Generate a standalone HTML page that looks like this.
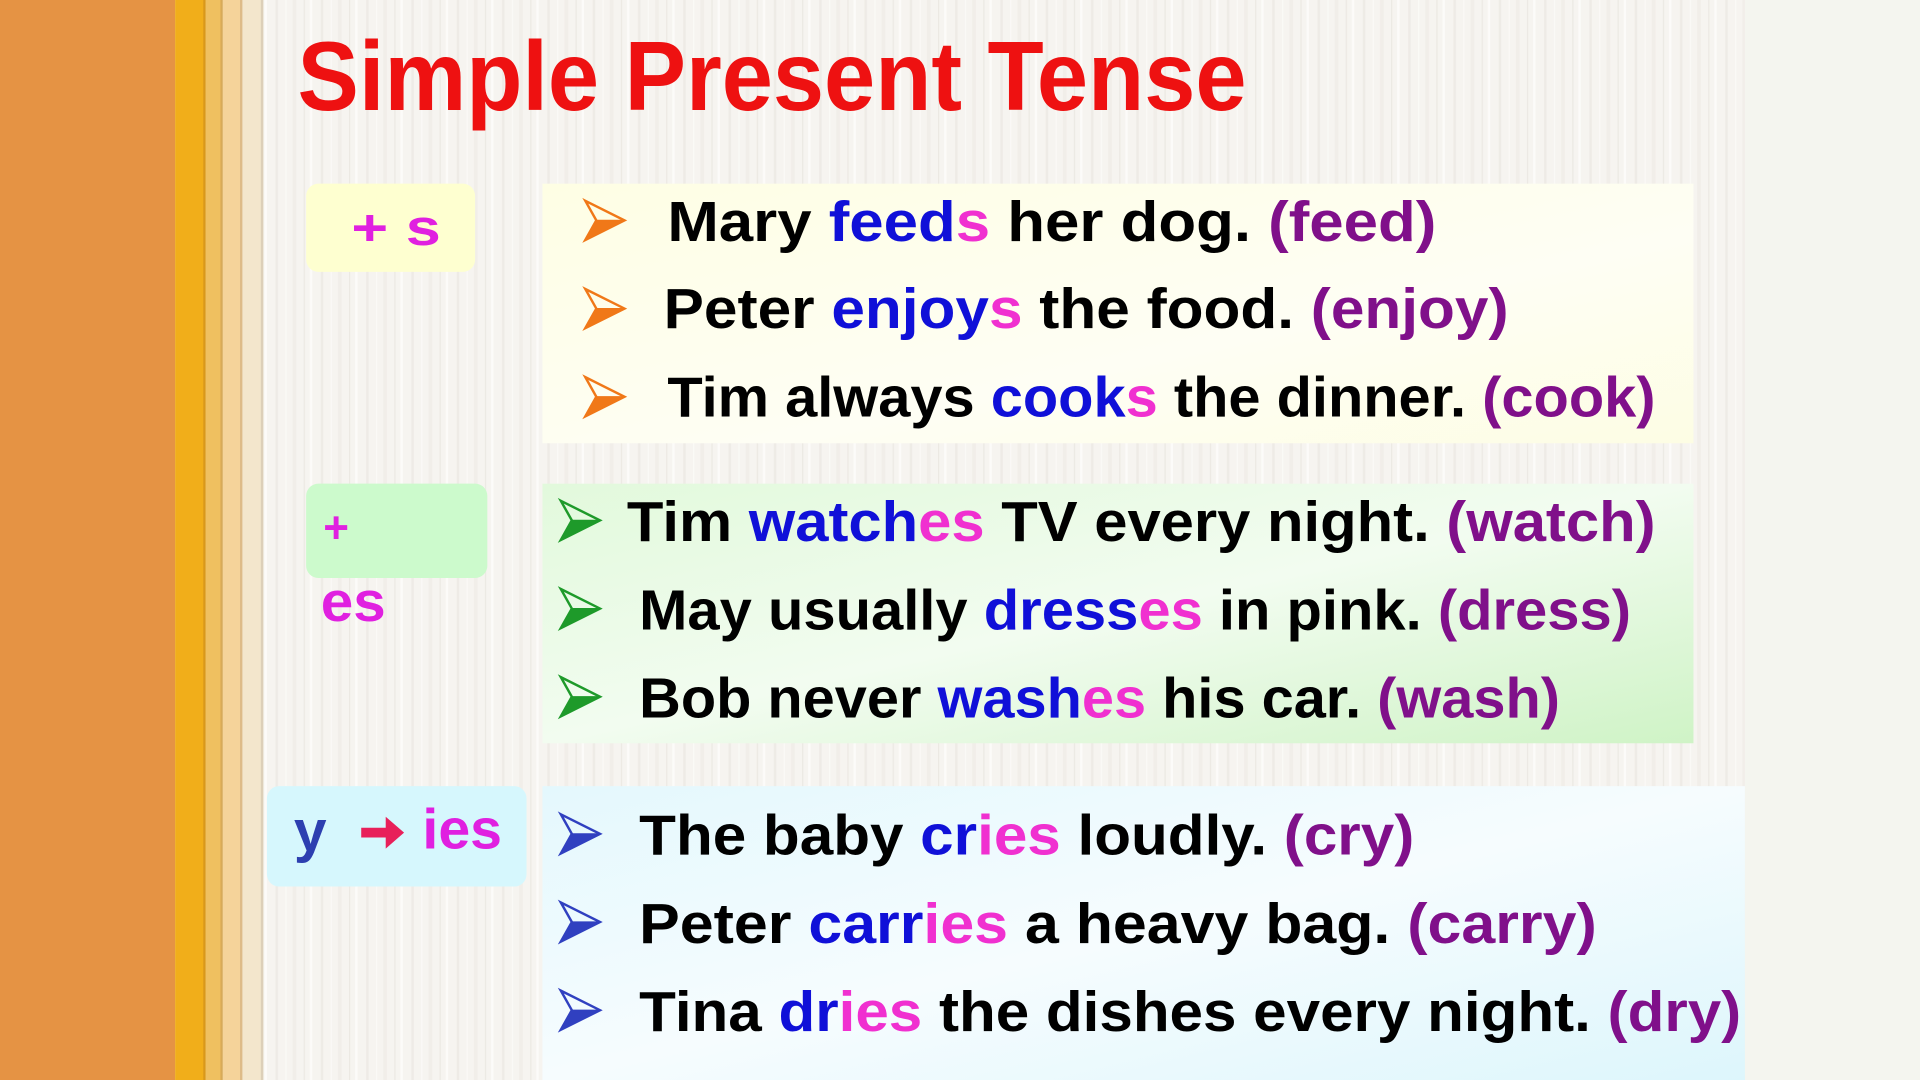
<!DOCTYPE html>
<html><head><meta charset="utf-8"><style>
html,body{margin:0;padding:0;width:1920px;height:1080px;overflow:hidden;background:#F4F5EF}
svg{display:block}
text{font-family:"Liberation Sans",sans-serif;font-weight:bold}
</style></head><body>
<svg width="1920" height="1080" viewBox="0 0 1568 882" xmlns="http://www.w3.org/2000/svg">
<defs>
<pattern id="wood" width="37" height="882" patternUnits="userSpaceOnUse">
<rect width="37" height="882" fill="#F6F4F0"/>
<rect x="3" width="2" height="882" fill="#EEEBE6"/>
<rect x="11" width="1" height="882" fill="#FBFAF7"/>
<rect x="17" width="3" height="882" fill="#F1EEE9"/>
<rect x="26" width="1" height="882" fill="#ECE9E3"/>
<rect x="31" width="2" height="882" fill="#FCFBF9"/>
</pattern>
<linearGradient id="gy" x1="0" y1="0" x2="1" y2="1"><stop offset="0" stop-color="#FEFEE4"/><stop offset=".6" stop-color="#FEFEF4"/><stop offset="1" stop-color="#FDFDE4"/></linearGradient>
<linearGradient id="gg" x1="0" y1="0" x2="1" y2="1"><stop offset="0" stop-color="#E2F9DC"/><stop offset=".5" stop-color="#F2FCF0"/><stop offset="1" stop-color="#CFF3C6"/></linearGradient>
<linearGradient id="gb" x1="0" y1="0" x2="1" y2="1"><stop offset="0" stop-color="#E4F8FD"/><stop offset=".5" stop-color="#F6FCFE"/><stop offset="1" stop-color="#DDF6FC"/></linearGradient>
<g id="arr"><path d="M0,0 L32,16 L0,32 L9,16 Z" fill="none" stroke-width="2"/><path d="M9,16 L32,16 L0,32 Z"/></g>
</defs>
<rect width="1568" height="882" fill="#F4F5EF"/>
<rect x="215" width="1210" height="882" fill="url(#wood)"/>
<rect x="0" width="143" height="882" fill="#E59344"/>
<rect x="143" width="25" height="882" fill="#F1AE1A"/>
<rect x="166" width="2" height="882" fill="#D9981A"/>
<rect x="168" width="13" height="882" fill="#EFC060"/>
<rect x="180" width="2" height="882" fill="#D8AA58"/>
<rect x="182" width="15" height="882" fill="#F5D39A"/>
<rect x="196" width="2" height="882" fill="#DDBB88"/>
<rect x="198" width="17" height="882" fill="#F3E6CC"/>
<rect x="213" width="2" height="882" fill="#DCCFB8"/>

<text x="243" y="90" font-size="80" fill="#EE1111" textLength="775" lengthAdjust="spacingAndGlyphs">Simple Present Tense</text>

<rect x="443" y="150" width="940" height="212" fill="url(#gy)"/>
<rect x="443" y="395" width="940" height="212" fill="url(#gg)"/>
<rect x="443" y="642" width="982" height="240" fill="url(#gb)"/>
<rect x="250" y="150" width="138" height="72" rx="10" fill="#FEFFD0"/>
<rect x="250" y="395" width="148" height="77" rx="10" fill="#CCFACC"/>
<rect x="218" y="642" width="212" height="82" rx="10" fill="#D6F7FD"/>

<text x="287" y="200" font-size="42" fill="#E020E0" textLength="73" lengthAdjust="spacingAndGlyphs">+ s</text>
<text x="264" y="443" font-size="36" fill="#E020E0">+</text>
<text x="262" y="507" font-size="46" fill="#E020E0" textLength="53" lengthAdjust="spacingAndGlyphs">es</text>
<text x="240" y="695" font-size="48" fill="#2D3FB0">y</text>
<path d="M295,676 H315 V667 L330,680 L315,693 V684 H295 Z" fill="#E8205A"/>
<text x="345" y="693" font-size="46" fill="#E020E0" textLength="65" lengthAdjust="spacingAndGlyphs">ies</text>

<use href="#arr" x="478" y="164" fill="#F07818" stroke="#F07818"/>
<use href="#arr" x="478" y="236" fill="#F07818" stroke="#F07818"/>
<use href="#arr" x="478" y="308" fill="#F07818" stroke="#F07818"/>
<use href="#arr" x="458" y="409" fill="#1E9A2A" stroke="#1E9A2A"/>
<use href="#arr" x="458" y="481" fill="#1E9A2A" stroke="#1E9A2A"/>
<use href="#arr" x="458" y="553" fill="#1E9A2A" stroke="#1E9A2A"/>
<use href="#arr" x="458" y="665" fill="#3040C0" stroke="#3040C0"/>
<use href="#arr" x="458" y="737" fill="#3040C0" stroke="#3040C0"/>
<use href="#arr" x="458" y="809" fill="#3040C0" stroke="#3040C0"/>

<g font-size="46" fill="#000">
<text x="545" y="197" textLength="628" lengthAdjust="spacingAndGlyphs">Mary <tspan fill="#1010D8">feed</tspan><tspan fill="#F030D0">s</tspan> her dog. <tspan fill="#80108A">(feed)</tspan></text>
<text x="542" y="268" textLength="690" lengthAdjust="spacingAndGlyphs">Peter <tspan fill="#1010D8">enjoy</tspan><tspan fill="#F030D0">s</tspan> the food. <tspan fill="#80108A">(enjoy)</tspan></text>
<text x="545" y="340" textLength="807" lengthAdjust="spacingAndGlyphs">Tim always <tspan fill="#1010D8">cook</tspan><tspan fill="#F030D0">s</tspan> the dinner. <tspan fill="#80108A">(cook)</tspan></text>
<text x="512" y="442" textLength="840" lengthAdjust="spacingAndGlyphs">Tim <tspan fill="#1010D8">watch</tspan><tspan fill="#F030D0">es</tspan> TV every night. <tspan fill="#80108A">(watch)</tspan></text>
<text x="522" y="514" textLength="810" lengthAdjust="spacingAndGlyphs">May usually <tspan fill="#1010D8">dress</tspan><tspan fill="#F030D0">es</tspan> in pink. <tspan fill="#80108A">(dress)</tspan></text>
<text x="522" y="586" textLength="752" lengthAdjust="spacingAndGlyphs">Bob never <tspan fill="#1010D8">wash</tspan><tspan fill="#F030D0">es</tspan> his car. <tspan fill="#80108A">(wash)</tspan></text>
<text x="522" y="698" textLength="633" lengthAdjust="spacingAndGlyphs">The baby <tspan fill="#1010D8">cr</tspan><tspan fill="#F030D0">ies</tspan> loudly. <tspan fill="#80108A">(cry)</tspan></text>
<text x="522" y="770" textLength="782" lengthAdjust="spacingAndGlyphs">Peter <tspan fill="#1010D8">carr</tspan><tspan fill="#F030D0">ies</tspan> a heavy bag. <tspan fill="#80108A">(carry)</tspan></text>
<text x="522" y="842" textLength="900" lengthAdjust="spacingAndGlyphs">Tina <tspan fill="#1010D8">dr</tspan><tspan fill="#F030D0">ies</tspan> the dishes every night. <tspan fill="#80108A">(dry)</tspan></text>
</g>
</svg>
</body></html>
